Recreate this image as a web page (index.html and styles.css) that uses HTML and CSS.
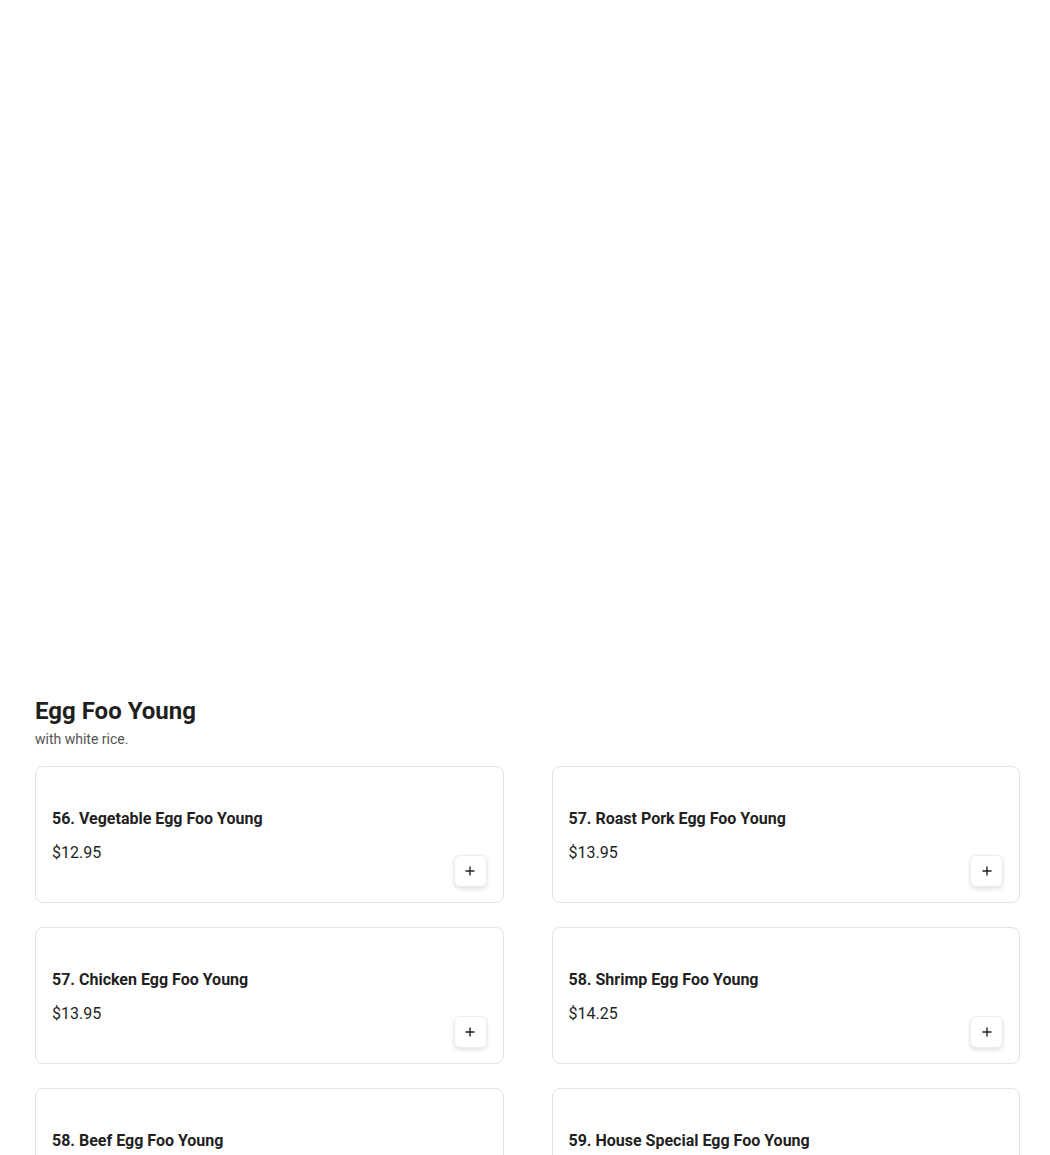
FILE: index.html
```html
<!DOCTYPE html>
<html lang="en">
<head>
<meta charset="utf-8">
<title>Egg Foo Young</title>
<link rel="stylesheet" href="styles.css">
</head>
<body>
<main class="page">
  <section class="category">
    <h2 class="category-title">Egg Foo Young</h2>
    <p class="category-desc">with white rice.</p>
    <div class="grid">
      <article class="card">
        <div class="info">
          <h3 class="item-name">56. Vegetable Egg Foo Young</h3>
          <div class="price">$12.95</div>
        </div>
        <button class="add" aria-label="Add"><svg width="12" height="12" viewBox="0 0 12 12"><path d="M6 1.5v9M1.5 6h9" stroke="#222" stroke-width="1.4" fill="none"/></svg></button>
      </article>
      <article class="card">
        <div class="info">
          <h3 class="item-name">57. Roast Pork Egg Foo Young</h3>
          <div class="price">$13.95</div>
        </div>
        <button class="add" aria-label="Add"><svg width="12" height="12" viewBox="0 0 12 12"><path d="M6 1.5v9M1.5 6h9" stroke="#222" stroke-width="1.4" fill="none"/></svg></button>
      </article>
      <article class="card">
        <div class="info">
          <h3 class="item-name">57. Chicken Egg Foo Young</h3>
          <div class="price">$13.95</div>
        </div>
        <button class="add" aria-label="Add"><svg width="12" height="12" viewBox="0 0 12 12"><path d="M6 1.5v9M1.5 6h9" stroke="#222" stroke-width="1.4" fill="none"/></svg></button>
      </article>
      <article class="card">
        <div class="info">
          <h3 class="item-name">58. Shrimp Egg Foo Young</h3>
          <div class="price">$14.25</div>
        </div>
        <button class="add" aria-label="Add"><svg width="12" height="12" viewBox="0 0 12 12"><path d="M6 1.5v9M1.5 6h9" stroke="#222" stroke-width="1.4" fill="none"/></svg></button>
      </article>
      <article class="card">
        <div class="info">
          <h3 class="item-name">58. Beef Egg Foo Young</h3>
          <div class="price">$13.95</div>
        </div>
        <button class="add" aria-label="Add"><svg width="12" height="12" viewBox="0 0 12 12"><path d="M6 1.5v9M1.5 6h9" stroke="#222" stroke-width="1.4" fill="none"/></svg></button>
      </article>
      <article class="card">
        <div class="info">
          <h3 class="item-name">59. House Special Egg Foo Young</h3>
          <div class="price">$14.25</div>
        </div>
        <button class="add" aria-label="Add"><svg width="12" height="12" viewBox="0 0 12 12"><path d="M6 1.5v9M1.5 6h9" stroke="#222" stroke-width="1.4" fill="none"/></svg></button>
      </article>
    </div>
  </section>
</main>
</body>
</html>
```
FILE: styles.css
```css
html, body {
  margin: 0;
  padding: 0;
  background: #ffffff;
}
body {
  font-family: Roboto, "Liberation Sans", Arial, sans-serif;
  color: #1f1f1f;
}
.page {
  padding: 697px 30px 0 35px;
}
.category-title {
  margin: 0;
  font-size: 24px;
  line-height: 28px;
  font-weight: 700;
  color: #1f1f1f;
}
.category-desc {
  margin: 4px 0 0;
  font-size: 14px;
  line-height: 20px;
  color: #555555;
}
.grid {
  margin-top: 17px;
  display: grid;
  grid-template-columns: 1fr 1fr;
  column-gap: 48px;
  row-gap: 24px;
}
.card {
  border: 1px solid #e3e3e3;
  border-radius: 8px;
  padding: 40px 16px 15px 16px;
  display: flex;
  justify-content: space-between;
  align-items: flex-end;
}
.info {
  padding-bottom: 22px;
}
.item-name {
  margin: 0;
  font-size: 16px;
  line-height: 24px;
  font-weight: 700;
  color: #1f1f1f;
}
.price {
  margin-top: 10px;
  font-size: 16px;
  line-height: 24px;
  color: #1f1f1f;
}
.add {
  width: 33px;
  height: 32px;
  padding: 0;
  border: 1px solid #ececec;
  border-radius: 6px;
  background: #ffffff;
  box-shadow: 0 2px 4px rgba(0, 0, 0, 0.12);
  display: flex;
  align-items: center;
  justify-content: center;
  cursor: pointer;
}
```
